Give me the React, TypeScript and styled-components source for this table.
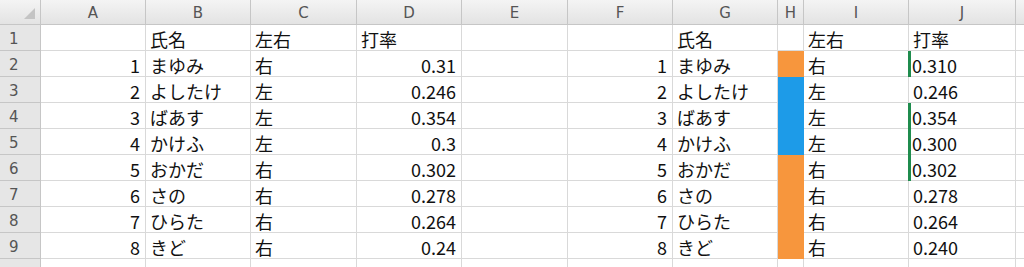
import styled, { createGlobalStyle, css } from 'styled-components'

const GlobalStyle = createGlobalStyle`
    html, body {
        margin: 0;
        padding: 0;
        background: #ffffff;
    }
    body {
        font-family: 'Noto Sans CJK JP', 'Noto Sans', sans-serif;
        color: #111;
    }
`

const ORANGE = '#f7963d'
const BLUE = '#1d9be8'
const GRID = '#d9d9d9'
const HEADER_LINE = '#c6c6c6'

const columns = [
    { key: 'A', width: 105 },
    { key: 'B', width: 105 },
    { key: 'C', width: 106 },
    { key: 'D', width: 105 },
    { key: 'E', width: 106 },
    { key: 'F', width: 105 },
    { key: 'G', width: 105 },
    { key: 'H', width: 26 },
    { key: 'I', width: 105 },
    { key: 'J', width: 107 },
]

type Player = {
    no: number
    name: string
    hand: '右' | '左'
    avg: number
    bar: boolean
}

const players: Player[] = [
    { no: 1, name: 'まゆみ', hand: '右', avg: 0.31, bar: true },
    { no: 2, name: 'よしたけ', hand: '左', avg: 0.246, bar: false },
    { no: 3, name: 'ばあす', hand: '左', avg: 0.354, bar: true },
    { no: 4, name: 'かけふ', hand: '左', avg: 0.3, bar: true },
    { no: 5, name: 'おかだ', hand: '右', avg: 0.302, bar: true },
    { no: 6, name: 'さの', hand: '右', avg: 0.278, bar: false },
    { no: 7, name: 'ひらた', hand: '右', avg: 0.264, bar: false },
    { no: 8, name: 'きど', hand: '右', avg: 0.24, bar: false },
]

const Sheet = styled.div`
    display: grid;
    grid-template-columns: 41px ${columns.map((c) => `${c.width}px`).join(' ')} 1fr;
    grid-template-rows: 25px;
    grid-auto-rows: 26px;
    width: 1024px;
    height: 267px;
    overflow: hidden;
`

const headerBase = css`
    box-sizing: border-box;
    background: linear-gradient(#f4f4f4, #e3e3e3);
    color: #555;
    font-family: 'DejaVu Sans', 'Liberation Sans', sans-serif;
    font-size: 15px;
    display: flex;
    align-items: center;
`

const Corner = styled.div`
    ${headerBase};
    position: relative;
    border-right: 1px solid ${HEADER_LINE};
    border-bottom: 1px solid ${HEADER_LINE};

    svg {
        position: absolute;
        right: 5px;
        bottom: 5px;
    }
`

const ColumnHeader = styled.div`
    ${headerBase};
    justify-content: center;
    border-right: 1px solid ${HEADER_LINE};
    border-bottom: 1px solid ${HEADER_LINE};
    padding-top: 1px;
`

const RowHeader = styled.div`
    ${headerBase};
    background: #e6e6e6;
    padding-left: 9px;
    padding-top: 2px;
    border-right: 1px solid ${HEADER_LINE};
    border-bottom: 1px solid ${HEADER_LINE};
`

const Cell = styled.div<{ $align?: 'left' | 'right'; $fill?: string; $bar?: boolean }>`
    box-sizing: border-box;
    position: relative;
    display: flex;
    align-items: center;
    justify-content: ${({ $align }) => ($align === 'right' ? 'flex-end' : 'flex-start')};
    padding: 2px 5px 0 4px;
    font-size: 18px;
    line-height: 1;
    white-space: nowrap;
    background: ${({ $fill }) => $fill ?? '#ffffff'};
    border-right: 1px solid ${({ $fill }) => $fill ?? GRID};
    border-bottom: 1px solid ${({ $fill }) => $fill ?? GRID};

    ${({ $bar }) =>
        $bar &&
        css`
            padding-left: 3px;
            &::before {
                content: '';
                position: absolute;
                left: -1px;
                top: 0;
                bottom: -1px;
                width: 3px;
                background: #1f8c4d;
            }
        `}
`

const cellsFor = (player?: Player) => {
    if (!player) return columns.map((c) => <Cell key={c.key} />).concat(<Cell key="K" />)
    const fill = player.hand === '右' ? ORANGE : BLUE
    return [
        <Cell key="A" $align="right">{player.no}</Cell>,
        <Cell key="B">{player.name}</Cell>,
        <Cell key="C">{player.hand}</Cell>,
        <Cell key="D" $align="right">{String(player.avg)}</Cell>,
        <Cell key="E" />,
        <Cell key="F" $align="right">{player.no}</Cell>,
        <Cell key="G">{player.name}</Cell>,
        <Cell key="H" $fill={fill} />,
        <Cell key="I">{player.hand}</Cell>,
        <Cell key="J" $bar={player.bar}>{player.avg.toFixed(3)}</Cell>,
        <Cell key="K" />,
    ]
}

// the last row only shows its top edge, so it gets no label
const Row = ({ label, player }: { label?: number; player?: Player }) => (
    <>
        <RowHeader>{label}</RowHeader>
        {cellsFor(player)}
    </>
)

export default function App() {
    return (
        <>
            <GlobalStyle />
            <Sheet>
                <Corner>
                    <svg width="11" height="11" viewBox="0 0 11 11">
                        <polygon points="11,0 11,11 0,11" fill="#c4c4c4" />
                    </svg>
                </Corner>
                {columns.map((c) => (
                    <ColumnHeader key={c.key}>{c.key}</ColumnHeader>
                ))}
                <ColumnHeader />

                <RowHeader>1</RowHeader>
                <Cell />
                <Cell>氏名</Cell>
                <Cell>左右</Cell>
                <Cell>打率</Cell>
                <Cell />
                <Cell />
                <Cell>氏名</Cell>
                <Cell />
                <Cell>左右</Cell>
                <Cell>打率</Cell>
                <Cell />

                {players.map((p, i) => (
                    <Row key={p.no} label={i + 2} player={p} />
                ))}
                <Row />
            </Sheet>
        </>
    )
}
